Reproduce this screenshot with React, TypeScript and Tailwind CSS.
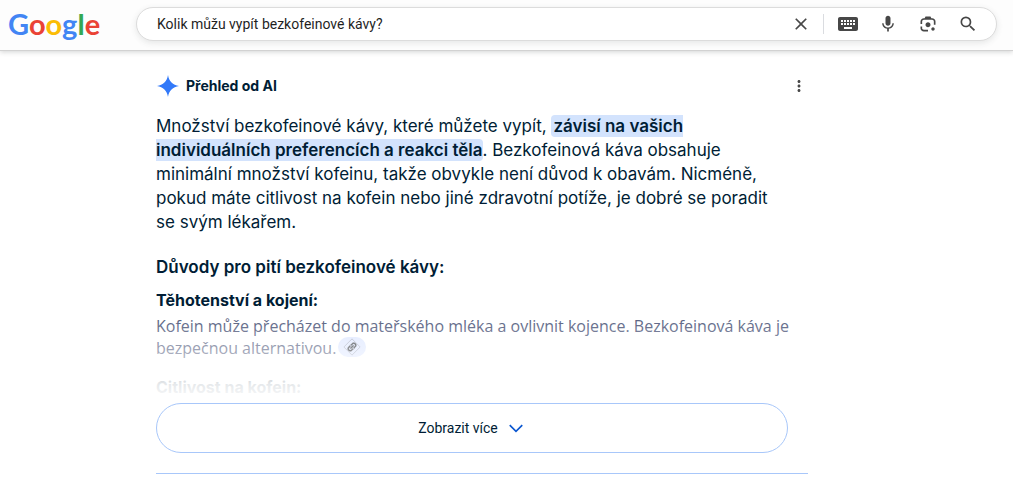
import React from 'react'
import { MdClose, MdKeyboard, MdLink, MdMic, MdMoreVert, MdSearch } from 'react-icons/md'

function LensIcon() {
  return (
    <svg viewBox="0 -960 960 960" className="size-5" fill="currentColor" aria-hidden="true">
      <path d="M480-320q-50 0-85-35t-35-85q0-50 35-85t85-35q50 0 85 35t35 85q0 50-35 85t-85 35Zm240 160q-33 0-56.500-23.500T640-240q0-33 23.500-56.500T720-320q33 0 56.500 23.500T800-240q0 33-23.500 56.500T720-160Zm-440 40q-66 0-113-47t-47-113v-80h80v80q0 33 23.500 56.500T280-200h200v80H280Zm480-320v-160q0-33-23.500-56.500T680-680H280q-33 0-56.500 23.500T200-600v120h-80v-120q0-66 47-113t113-47h40l40-80h240l40 80h40q66 0 113 47t47 113v160h-80Z" />
    </svg>
  )
}

export default function SearchPage() {
  return (
    <div className="min-h-screen bg-white font-['Inter',sans-serif] text-[#001d35]">

      {/* Search header */}
      <header className="flex h-[51px] items-center border-b border-[#d2d2d2] bg-[#fdfdfd] pb-[2px] pl-2 pr-4 shadow-[0_1px_5px_rgba(32,33,36,0.2)]">
        <a href="#" aria-label="Google" className="w-32 shrink-0 font-[Lato] text-[29px] leading-8 font-bold">
          <span className="text-[#4285f4]">G</span>
          <span className="text-[#ea4335]">o</span>
          <span className="text-[#fbbc05]">o</span>
          <span className="text-[#4285f4]">g</span>
          <span className="text-[#34a853]">l</span>
          <span className="text-[#ea4335]">e</span>
        </a>

        <form className="flex h-[34px] flex-1 items-center rounded-full border border-[#dcdcdc] bg-white pl-5 pr-[18px] text-[#474747] shadow-[0_2px_6px_rgba(60,64,67,0.12)]">
          <input
            type="text"
            aria-label="Hledat"
            defaultValue="Kolik můžu vypít bezkofeinové kávy?"
            className="min-w-0 flex-1 bg-transparent font-['Roboto',sans-serif] text-sm text-[#1f1f1f] outline-none"
          />
          <button type="button" aria-label="Vymazat" className="mr-3">
            <MdClose className="size-5" />
          </button>
          <div className="mr-3 h-5 border-l border-[#dadce0]"></div>
          <div className="flex items-center gap-5">
            <button type="button" aria-label="Klávesnice">
              <MdKeyboard className="size-6" />
            </button>
            <button type="button" aria-label="Hledat hlasem" className="-ml-0.5">
              <MdMic className="size-5" />
            </button>
            <button type="button" aria-label="Hledat obrázkem">
              <LensIcon />
            </button>
            <button type="submit" aria-label="Hledat">
              <MdSearch className="size-5" />
            </button>
          </div>
        </form>
      </header>

      <main className="ml-39 max-w-[652px] border-b border-[#a8c7fa] pt-[23px] pb-5">

        {/* Overview title */}
        <div className="flex h-6 items-center">
          <svg viewBox="0 0 24 24" className="size-6" fill="#3279f9" aria-hidden="true">
            <path d="M12 1c.9 6.100 4.900 10.100 11 11-6.100.9-10.100 4.900-11 11-.9-6.100-4.900-10.100-11-11 6.100-.9 10.100-4.900 11-11z" />
          </svg>
          <h1 className="ml-[6px] text-sm font-bold">Přehled od AI</h1>
          <button type="button" aria-label="Více možností" className="ml-auto text-[#474747]">
            <MdMoreVert className="size-[18px]" />
          </button>
        </div>

        <div className="relative mt-4 h-[289px] overflow-hidden">
          <p className="text-[17px] leading-6">
            Množství bezkofeinové kávy, které můžete vypít,{' '}
            <mark className="rounded-sm bg-[#d3e3fd] py-[1px] pl-[2px] font-semibold text-[#001d35]">
              závisí na vašich<br />
              individuálních preferencích a reakci těla
            </mark>
            . Bezkofeinová káva obsahuje<br />
            minimální množství kofeinu, takže obvykle není důvod k obavám. Nicméně,<br />
            pokud máte citlivost na kofein nebo jiné zdravotní potíže, je dobré se poradit<br />
            se svým lékařem.
          </p>

          <h2 className="mt-[21px] text-[17px] leading-6 font-semibold">Důvody pro pití bezkofeinové kávy:</h2>

          <h3 className="mt-[9px] leading-6 font-bold">Těhotenství a kojení:</h3>
          <p className="mt-[3px] font-['Open_Sans',sans-serif] leading-[22px] text-[#545d7e]">
            Kofein může přecházet do mateřského mléka a ovlivnit kojence. Bezkofeinová káva je<br />
            bezpečnou alternativou.
            <button type="button" aria-label="Zdroje" className="ml-[2px] inline-flex h-5 w-7 items-center justify-center rounded-full bg-[#dfe8ff] align-top text-[#303338]">
              <MdLink className="size-3 -rotate-45 stroke-current stroke-1" />
            </button>
          </p>

          <h3 className="mt-4 leading-6 font-bold">Citlivost na kofein:</h3>

          {/* Fade out */}
          <div className="pointer-events-none absolute inset-x-0 bottom-0 h-24 bg-linear-to-b from-white/0 from-10% via-white/90 via-80% to-white"></div>
        </div>

        <button
          type="button"
          className="flex h-[50px] w-[calc(100%-20px)] items-center justify-center rounded-full border border-[#a8c7fa] bg-white font-['Roboto',sans-serif] text-sm"
        >
          Zobrazit více
          <svg viewBox="0 0 24 24" className="ml-2 size-5" fill="none" stroke="#0b57d0" strokeWidth="2" aria-hidden="true">
            <path d="M4.500 8.500l7.500 7.500 7.500-7.500" />
          </svg>
        </button>
      </main>
    </div>
  )
}
